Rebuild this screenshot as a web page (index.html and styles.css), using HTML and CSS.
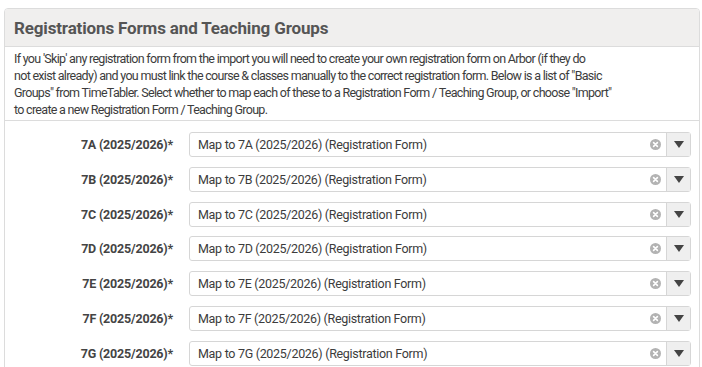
FILE: index.html
```html
<!DOCTYPE html>
<html>
<head>
  <title>Registrations Forms and Teaching Groups</title>
  <meta name="viewport" content="width=device-width, initial-scale=1.0" />
  <link rel="stylesheet" href="styles.css">
</head>
<body>
<div class="panel">
  <div class="panel-header">Registrations Forms and Teaching Groups</div>
  <div class="panel-info">
    If you 'Skip' any registration form from the import you will need to create your own registration form on Arbor (if they do<br>
    not exist already) and you must link the course &amp; classes manually to the correct registration form. Below is a list of "Basic<br>
    Groups" from TimeTabler. Select whether to map each of these to a Registration Form / Teaching Group, or choose "Import"<br>
    to create a new Registration Form / Teaching Group.
  </div>
  <div class="form-rows" id="rows"></div>
</div>
<script>
const groups = ["7A", "7B", "7C", "7D", "7E", "7F", "7G"];
const rows = document.getElementById("rows");
groups.forEach(g => {
  const row = document.createElement("div");
  row.className = "form-row";
  row.innerHTML = `
    <label class="row-label">${g} (2025/2026)*</label>
    <div class="select">
      <span class="select-value">Map to ${g} (2025/2026) (Registration Form)</span>
      <span class="select-clear"><svg width="11" height="11" viewBox="0 0 11 11"><circle cx="5.5" cy="5.5" r="5.5" fill="#b3b3b3"/><path d="M3.6 3.6L7.4 7.4M7.4 3.6L3.6 7.4" stroke="#fff" stroke-width="1.6" stroke-linecap="round"/></svg></span>
      <span class="select-arrow"><svg width="10" height="7" viewBox="0 0 10 7"><path d="M0 0H10L5 7Z" fill="#444"/></svg></span>
    </div>`;
  rows.appendChild(row);
});
</script>
</body>
</html>
```

FILE: styles.css
```css
body {
  margin: 0;
  padding: 8px 2px 0 4px;
  background: #fff;
  font-family: 'Roboto', 'Liberation Sans', sans-serif;
  color: #444;
}
.panel {
  border: 1px solid #dcdcdc;
  border-radius: 4px;
  overflow: hidden;
}
.panel-header {
  background: #f0efee;
  border-bottom: 1px solid #dcdcdc;
  padding: 9px 9px 8px;
  font-size: 17px;
  font-weight: bold;
  letter-spacing: -0.15px;
  color: #555;
  line-height: 20px;
}
.panel-info {
  padding: 3px 9px 2px;
  font-size: 12.5px;
  letter-spacing: -0.7px;
  line-height: 17px;
  white-space: nowrap;
  color: #3c3c3c;
  border-bottom: 1px solid #dcdcdc;
}
.form-rows {
  display: flex;
  flex-direction: column;
  gap: 9.8px;
  padding: 11px 8px 10px 0;
}
.form-row {
  display: flex;
  align-items: center;
  gap: 16px;
}
.row-label {
  width: 168px;
  text-align: right;
  font-size: 12.5px;
  font-weight: bold;
  letter-spacing: -0.2px;
  color: #444;
}
.select {
  flex: 1;
  display: flex;
  align-items: center;
  height: 23px;
  border: 1px solid #d6d6d6;
  border-radius: 3px;
  background: #fff;
  font-size: 12.5px;
  letter-spacing: -0.3px;
}
.select-value {
  flex: 1;
  padding-left: 8px;
  color: #3c3c3c;
}
.select-clear {
  display: flex;
  padding-right: 5px;
}
.select-arrow {
  width: 23px;
  height: 100%;
  display: flex;
  align-items: center;
  justify-content: center;
  background: #efefef;
  border-left: 1px solid #d6d6d6;
}
```
